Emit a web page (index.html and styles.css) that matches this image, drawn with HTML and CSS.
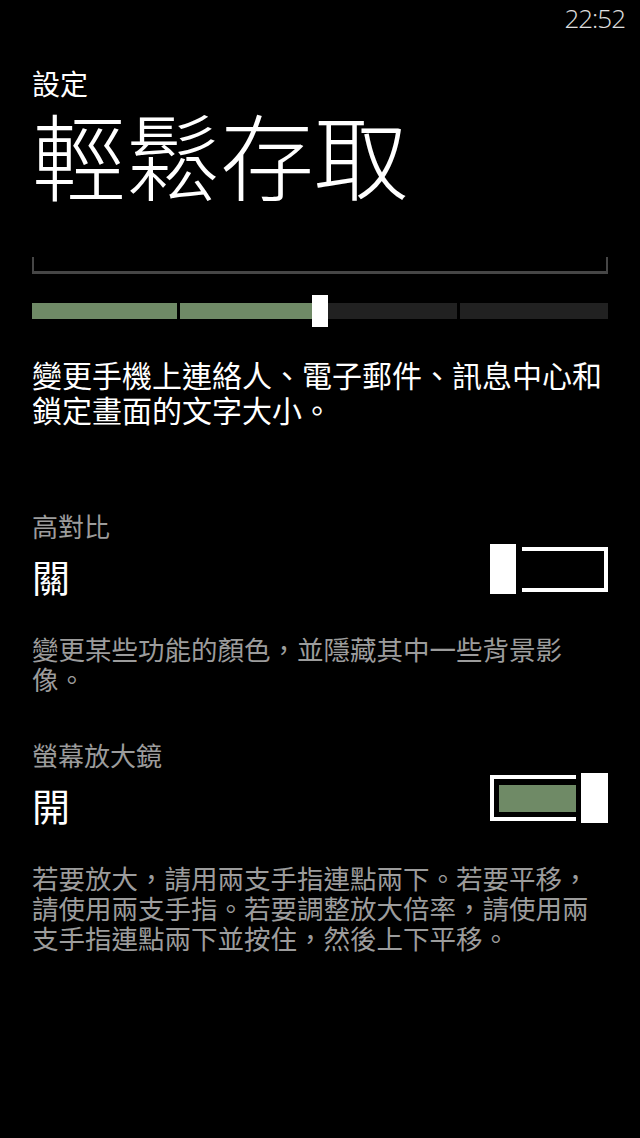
FILE: index.html
```html
<!doctype html>
<html>

<head>
	<meta charset="utf-8">
	<link rel="stylesheet" href="styles.css">
</head>

<body>
	<div class="status">22:52</div>
	<div class="page">
		<div class="app-title">設定</div>
		<div class="page-title">輕鬆存取</div>

		<div class="bracket"></div>
		<div class="slider">
			<div class="track">
				<div class="seg on"></div>
				<div class="seg on"></div>
				<div class="seg"></div>
				<div class="seg"></div>
			</div>
			<div class="thumb"></div>
		</div>
		<p class="intro">變更手機上連絡人、電子郵件、訊息中心和<br>鎖定畫面的文字大小。</p>

		<div class="setting">
			<div class="setting-label">高對比</div>
			<div class="setting-row">
				<div class="setting-value">關</div>
				<div class="toggle">
					<div class="toggle-thumb"></div>
					<div class="toggle-track"></div>
				</div>
			</div>
			<p class="setting-desc">變更某些功能的顏色，並隱藏其中一些背景影<br>像。</p>
		</div>

		<div class="setting">
			<div class="setting-label">螢幕放大鏡</div>
			<div class="setting-row">
				<div class="setting-value">開</div>
				<div class="toggle checked">
					<div class="toggle-track">
						<div class="toggle-fill"></div>
					</div>
					<div class="toggle-thumb"></div>
				</div>
			</div>
			<p class="setting-desc">若要放大，請用兩支手指連點兩下。若要平移，<br>請使用兩支手指。若要調整放大倍率，請使用兩<br>支手指連點兩下並按住，然後上下平移。</p>
		</div>
	</div>
</body>

</html>
```

FILE: styles.css
```css
body {
	margin: 0;
	background: #000;
	color: #fff;
	font-family: "Noto Sans CJK TC", "Noto Sans", sans-serif;
}

.status {
	height: 40px;
	line-height: 36px;
	padding: 0 15px;
	text-align: right;
	font-family: "Open Sans", "Noto Sans", sans-serif;
	font-weight: 300;
	font-size: 26px;
	letter-spacing: -1px;
	color: #e0e0e0;
}

.page {
	padding: 0 32px;
}

.app-title {
	margin-top: 25px;
	font-size: 28px;
	line-height: 36px;
}

.page-title {
	font-size: 94px;
	line-height: 104px;
	font-weight: 300;
}

.bracket {
	margin-top: 52px;
	height: 14px;
	border: 2px solid #464646;
	border-bottom-width: 3px;
	border-top: none;
}

.slider {
	position: relative;
	margin-top: 21px;
	height: 32px;
	display: flex;
	align-items: center;
}

.track {
	flex: 1;
	display: flex;
	gap: 3px;
	height: 16px;
}

/* the four steps are not quite the same width */
.seg {
	background: #212121;
}

.seg:nth-child(1) { flex: 145; }
.seg:nth-child(2) { flex: 138; }
.seg:nth-child(3) { flex: 136; }
.seg:nth-child(4) { flex: 148; }

.seg.on {
	background: #6f8a66;
}

.thumb {
	position: absolute;
	top: 0;
	left: calc(50% - 8px);
	width: 16px;
	height: 32px;
	background: #fff;
}

.intro {
	margin: 30px 0 81px;
	font-size: 30px;
	line-height: 35px;
}

.setting-label {
	font-size: 26px;
	line-height: 36px;
	color: #9c9c9c;
}

.setting-row {
	display: flex;
	justify-content: space-between;
	align-items: flex-start;
}

.setting-value {
	margin-top: 10px;
	font-size: 38px;
	line-height: 44px;
}

.setting-desc {
	margin: 36px 0 43px;
	font-size: 26.5px;
	line-height: 30px;
	color: #9c9c9c;
}

.toggle {
	display: flex;
	align-items: center;
	height: 50px;
}

.toggle-thumb {
	width: 26px;
	height: 50px;
	background: #fff;
}

.toggle-track {
	width: 82px;
	height: 37px;
	margin-left: 6px;
	border: 4px solid #fff;
	border-left: none;
}

.toggle.checked .toggle-track {
	display: flex;
	box-sizing: border-box;
	width: 86px;
	height: 46px;
	margin: 0 5px 0 0;
	padding: 6px 0 5px 5px;
	border: 4px solid #fff;
	border-right: none;
}

.toggle-fill {
	flex: 1;
	background: #6f8a66;
}

.toggle.checked .toggle-thumb {
	width: 27px;
}
```
